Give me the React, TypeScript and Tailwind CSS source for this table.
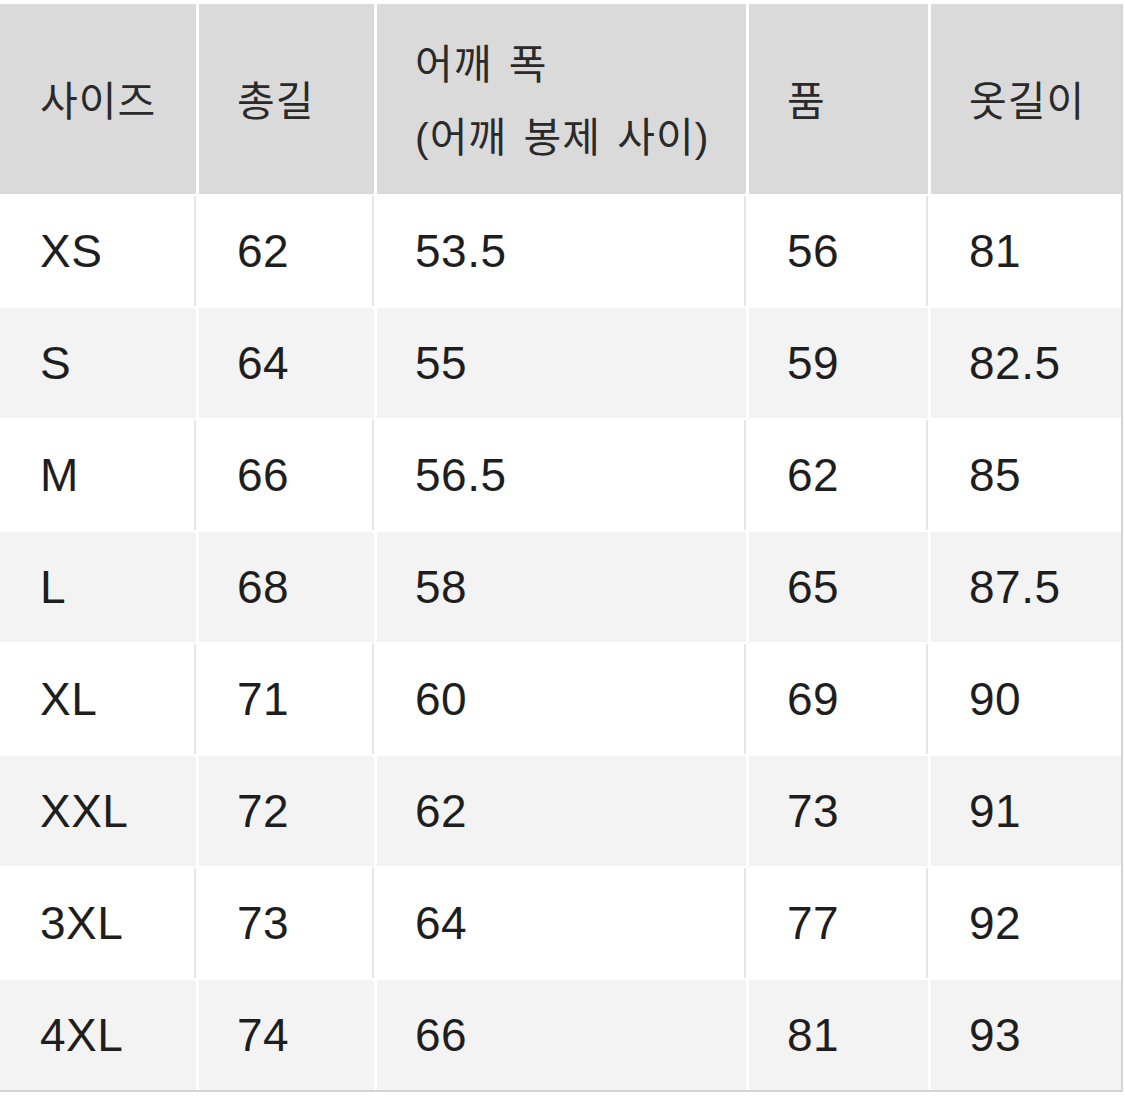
const headers: string[][] = [['사이즈'], ['총길'], ['어깨 폭', '(어깨 봉제 사이)'], ['품'], ['옷길이']];

const rows: string[][] = [
  ['XS', '62', '53.5', '56', '81'],
  ['S', '64', '55', '59', '82.5'],
  ['M', '66', '56.5', '62', '85'],
  ['L', '68', '58', '65', '87.5'],
  ['XL', '71', '60', '69', '90'],
  ['XXL', '72', '62', '73', '91'],
  ['3XL', '73', '64', '77', '92'],
  ['4XL', '74', '66', '81', '93'],
];

const sans = "font-['Liberation_Sans','Noto_Sans_CJK_KR',sans-serif]";

export default function App() {
  return (
    <div className="w-[1125px] h-[1098px] bg-white pt-[4px]">
      <div className="w-[1123px] border-r-2 border-b-2 border-[#d4d4d4]">
        <div className="grid grid-cols-[196px_175px_369px_179px_190px] gap-x-[3px] gap-y-[2px] bg-white">
          {headers.map((lines, i) => (
            <div
              key={i}
              className={`h-[190px] pt-[6px] bg-[#dadada] flex flex-col justify-center ${i === 0 ? 'pl-[40px]' : 'pl-[38px]'} ${sans} text-[41px] leading-[73px] tracking-[1px] [word-spacing:4px] text-[#2a2a2a]`}
            >
              {lines.map((l) => (
                <span key={l} className="whitespace-nowrap">{l}</span>
              ))}
            </div>
          ))}
          {rows.map((row, r) =>
            row.map((v, c) => (
              <div
                key={`${r}-${c}`}
                className={`h-[110px] flex items-center ${c === 0 ? 'pl-[40px]' : 'pl-[38px]'} ${
                  r % 2 === 0 ? 'bg-white' : 'bg-[#f3f3f3]'
                } ${r % 2 === 0 && c < 4 ? 'border-r-2 border-[#e6e6e6]' : ''} ${sans} text-[46px] tracking-[0.5px] text-[#1e1e1e]`}
              >
                {v}
              </div>
            ))
          )}
        </div>
      </div>
    </div>
  );
}
